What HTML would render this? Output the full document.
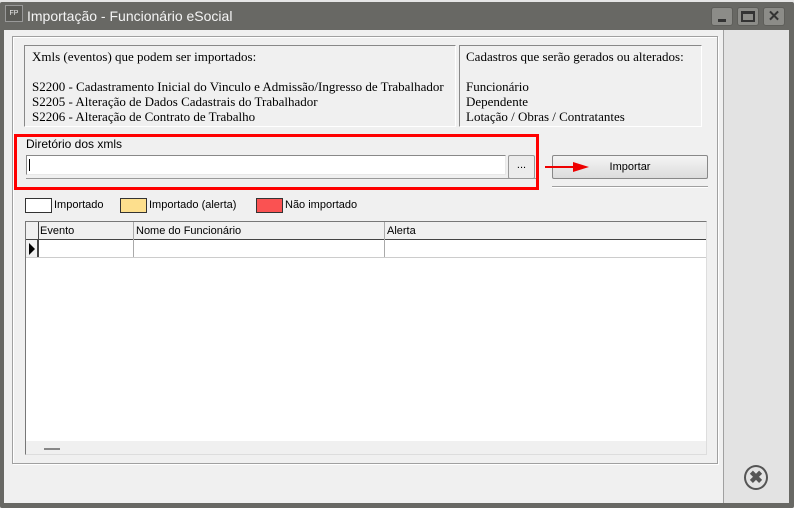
<!DOCTYPE html>
<html><head><meta charset="utf-8"><style>
*{margin:0;padding:0;box-sizing:border-box}
body{width:794px;height:508px;background:#e6e6e6;position:relative;overflow:hidden;font-family:"Liberation Sans",sans-serif;font-size:11px;color:#000}
.a{position:absolute}
.serif{font-family:"Liberation Serif",serif;font-size:13px;line-height:15px}
.tb{width:22px;height:19px;top:7px;background:#8c8c88;border:1px solid #5e5e5a;border-radius:3px}
</style></head><body>
<div class="a" style="left:0;top:2px;width:794px;height:506px;background:#686864;border-radius:2px"></div>
<div class="a" style="left:5px;top:5px;width:18px;height:17px;background:#5a5a56;border:1px solid #999;color:#eee;font-size:7px;line-height:15px;text-align:center">FP</div>
<div class="a" style="left:27px;top:8px;color:#f4f4f4;font-size:14px">Importação - Funcionário eSocial</div>
<div class="a tb" style="left:711px"><div class="a" style="left:6px;top:11px;width:8px;height:3px;background:#333"></div></div>
<div class="a tb" style="left:737px"><div class="a" style="left:3px;top:3px;width:14px;height:11px;border:2px solid #333;border-top-width:3px"></div></div>
<div class="a tb" style="left:763px;color:#333;font-weight:bold;font-size:15px;line-height:17px;text-align:center">✕</div>
<div class="a" style="left:4px;top:30px;width:785px;height:473px;background:#f0f0f0"></div>
<div class="a" style="left:723px;top:30px;width:66px;height:473px;background:#e3e3e3;border-left:1px solid #a0a0a0"></div>
<div class="a" style="left:12px;top:36px;width:706px;height:428px;border:1px solid #a0a0a0;box-shadow:inset 1px 1px 0 #fff,1px 1px 0 #fff"></div>
<div class="a serif" style="left:24px;top:45px;width:432px;height:82px;border:1px solid #888;border-right-color:#fff;border-bottom-color:#fff;padding:3px 0 0 7px">Xmls (eventos) que podem ser importados:<br><br>S2200 - Cadastramento Inicial do Vinculo e Admissão/Ingresso de Trabalhador<br>S2205 - Alteração de Dados Cadastrais do Trabalhador<br>S2206 - Alteração de Contrato de Trabalho</div>
<div class="a serif" style="left:459px;top:45px;width:243px;height:82px;border:1px solid #888;border-right-color:#fff;border-bottom-color:#fff;padding:3px 0 0 6px">Cadastros que serão gerados ou alterados:<br><br>Funcionário<br>Dependente<br>Lotação / Obras / Contratantes</div>
<div class="a" style="left:26px;top:137px;font-size:12px">Diretório dos xmls</div>
<div class="a" style="left:26px;top:155px;width:480px;height:20px;background:#fff;border:1px solid #888;border-right-color:#e8e8e8;border-bottom-color:#e8e8e8"><div class="a" style="left:2px;top:3px;width:1px;height:12px;background:#000"></div></div>
<div class="a" style="left:508px;top:155px;width:27px;height:24px;background:#ececec;border:1px solid #999;border-radius:2px;text-align:center;line-height:18px">...</div>
<div class="a" style="left:26px;top:178px;width:510px;height:1px;background:#999"></div>
<div class="a" style="left:14px;top:134px;width:525px;height:56px;border:3px solid #f00"></div>
<div class="a" style="left:552px;top:155px;width:156px;height:24px;background:linear-gradient(#f4f4f4,#dcdcdc);border:1px solid #888;border-radius:2px;text-align:center;line-height:22px;font-size:11px">Importar</div>
<div class="a" style="left:545px;top:166px;width:30px;height:2px;background:#e00"></div>
<div class="a" style="left:573px;top:162px;width:0;height:0;border-left:16px solid #e00;border-top:5px solid transparent;border-bottom:5px solid transparent"></div>
<div class="a" style="left:552px;top:186px;width:156px;height:2px;border-top:1px solid #a0a0a0;border-bottom:1px solid #fff"></div>
<div class="a" style="left:25px;top:198px;width:27px;height:15px;background:#fff;border:1px solid #333"></div>
<div class="a" style="left:54px;top:199px">Importado</div>
<div class="a" style="left:120px;top:198px;width:27px;height:15px;background:#fddf8d;border:1px solid #333"></div>
<div class="a" style="left:149px;top:199px">Importado (alerta)</div>
<div class="a" style="left:256px;top:198px;width:27px;height:15px;background:#fa5252;border:1px solid #333"></div>
<div class="a" style="left:285px;top:199px">Não importado</div>
<div class="a" style="left:25px;top:221px;width:682px;height:234px;background:#fff;border:1px solid #777;border-right-color:#ddd;border-bottom-color:#ddd"></div>
<div class="a" style="left:26px;top:222px;width:680px;height:18px;background:#f0f0f0;border-bottom:1px solid #444"></div>
<div class="a" style="left:38px;top:222px;width:1px;height:35px;background:#444"></div>
<div class="a" style="left:133px;top:222px;width:1px;height:35px;background:#aaa"></div>
<div class="a" style="left:384px;top:222px;width:1px;height:35px;background:#aaa"></div>
<div class="a" style="left:26px;top:240px;width:12px;height:18px;background:#f0f0f0;border-right:1px solid #444"></div>
<div class="a" style="left:29px;top:243px;width:0;height:0;border-left:6px solid #000;border-top:6px solid transparent;border-bottom:6px solid transparent"></div>
<div class="a" style="left:26px;top:257px;width:680px;height:1px;background:#ccc"></div>
<div class="a" style="left:40px;top:225px">Evento</div>
<div class="a" style="left:136px;top:225px">Nome do Funcionário</div>
<div class="a" style="left:387px;top:225px">Alerta</div>
<div class="a" style="left:26px;top:441px;width:680px;height:13px;background:#f0f0f0"></div>
<div class="a" style="left:44px;top:448px;width:16px;height:2px;background:#888"></div>
<div class="a" style="left:744px;top:465px;width:24px;height:25px;border:2px solid #555;border-radius:50%;color:#555;font-weight:bold;font-size:17px;line-height:21px;text-align:center">✖</div>
</body></html>
